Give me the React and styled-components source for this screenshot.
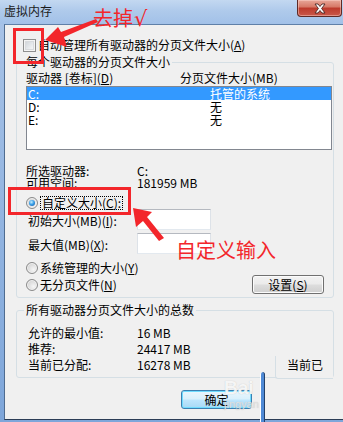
import React from 'react';
import styled, { createGlobalStyle } from 'styled-components';

const Global = createGlobalStyle`
  html, body { margin: 0; padding: 0; }
  body {
    width: 343px; height: 422px; overflow: hidden;
    font-family: "Noto Sans CJK SC", "Noto Sans", sans-serif;
    font-size: 12px; color: #000;
  }
  * { box-sizing: border-box; }
`;

const Window = styled.div`
  position: relative;
  width: 343px;
  height: 422px;
  overflow: hidden;
  background: linear-gradient(180deg, #a9c4e8 0%, #7ea6da 100%);
  display: flex;
  flex-direction: column;
`;

const TitleBar = styled.div`
  height: 24px;
  flex: none;
  display: flex;
  align-items: flex-start;
  background: linear-gradient(180deg, #c3d8f1 0%, #afcaeb 45%, #a2c1e8 100%);
`;

const Title = styled.div`
  padding: 4px 0 0 4px;
  font-size: 12px;
  line-height: 14px;
  color: #1b1b1b;
`;

const CloseButton = styled.div`
  margin-left: auto;
  margin-right: 1px;
  width: 45px;
  height: 17px;
  border: 1px solid #5e2a26;
  border-top: none;
  border-radius: 0 0 4px 4px;
  background: linear-gradient(180deg, #e8a799 0%, #d77a68 42%, #bd3b2c 52%, #c9584a 100%);
  box-shadow: inset 0 0 0 1px rgba(255, 220, 210, 0.45);
  display: flex;
  align-items: center;
  justify-content: center;
`;

const Client = styled.div`
  margin-left: 4px;
  height: 396px;
  flex: none;
  background: #f0f0f0;
  border-left: 1px solid #4f6c90;
  border-top: 1px solid #5f80a8;
  border-bottom: 1px solid #2b3d56;
  display: flex;
  flex-direction: column;
  align-items: flex-start;
`;

const CheckRow = styled.div`
  margin: 13px 0 0 18px;
  display: flex;
  align-items: center;
  gap: 2px;
  line-height: 14px;
  height: 14px;
`;

const CheckBox = styled.span`
  width: 13px;
  height: 13px;
  border: 1px solid #8f8f8f;
  background: linear-gradient(135deg, #c9ced4 0%, #eef0f2 70%, #f8f8f8 100%);
  box-shadow: inset 0 0 0 1px #f4f4f4, inset 0 0 0 2px #d8dadd;
`;

const Group = styled.fieldset`
  margin: ${(p) => p.$top}px 0 0 11px;
  width: 318px;
  min-inline-size: 0;
  border: 1px solid #d5dfe5;
  border-radius: 3px;
  padding: ${(p) => p.$pad};
`;

const Legend = styled.legend`
  padding: 0 2px;
  margin-left: ${(p) => p.$shift}px;
  line-height: 14px;
  font-size: 12px;
`;

const HeaderRow = styled.div`
  display: grid;
  grid-template-columns: 154px 1fr;
  line-height: 14px;
  height: 14px;
`;

const ListBox = styled.div`
  margin-top: 1px;
  width: 306px;
  height: 64px;
  border: 1px solid #828790;
  background: #fff;
`;

const ListRow = styled.div`
  display: grid;
  grid-template-columns: 182px 1fr;
  height: 13px;
  line-height: 13px;
  padding-left: 1px;
  background: ${(p) => (p.$selected ? '#3399ff' : 'transparent')};
  color: ${(p) => (p.$selected ? '#fff' : '#000')};
`;

const InfoGrid = styled.div`
  margin-top: ${(p) => p.$top}px;
  display: grid;
  grid-template-columns: ${(p) => p.$col}px 1fr;
  line-height: ${(p) => p.$lh}px;
`;

const RadioRow = styled.div`
  margin-top: ${(p) => p.$top}px;
  display: flex;
  align-items: center;
  gap: 2px;
  height: 13px;
  line-height: 13px;
`;

const Radio = styled.span`
  position: relative;
  width: 12px;
  height: 12px;
  border-radius: 50%;
  border: 1px solid #8a8a8a;
  background: radial-gradient(circle at 65% 65%, #f6f6f6 0%, #dadada 60%, #c8c8c8 100%);
  box-shadow: inset 0 0 0 1px #f2f2f2;
  flex: none;
  &::after {
    content: '';
    display: ${(p) => (p.$checked ? 'block' : 'none')};
    position: absolute;
    left: 2px;
    top: 2px;
    width: 6px;
    height: 6px;
    border-radius: 50%;
    background: radial-gradient(circle at 40% 35%, #c8efff 0%, #3aa0e8 45%, #0d4f9e 100%);
  }
`;

const FocusLabel = styled.span`
  border: 1px dotted #000;
  padding: 0 1px;
  line-height: 12px;
`;

const InputRow = styled.div`
  margin-top: ${(p) => p.$top}px;
  display: grid;
  grid-template-columns: 111px 74px;
  align-items: center;
  height: 21px;
`;

const FieldLabel = styled.span`
  padding: 2px 0 0 2px;
  line-height: 14px;
`;

const TextBox = styled.span`
  display: block;
  height: 21px;
  background: #fff;
  border: 1px solid;
  border-color: #b5b9c0 #dde2e8 #e3e9ef #dde2e8;
`;

const LastRow = styled.div`
  margin-top: 1px;
  display: flex;
  align-items: center;
  justify-content: space-between;
  height: 19px;
  width: 306px;
`;

const Button = styled.div`
  width: ${(p) => p.$w}px;
  height: 19px;
  margin-left: ${(p) => p.$left || 0}px;
  margin-right: ${(p) => p.$right || 0}px;
  margin-top: ${(p) => p.$top || 0}px;
  border: 1px solid ${(p) => (p.$default ? '#3c7fb1' : '#707070')};
  border-radius: 3px;
  background: ${(p) =>
    p.$default
      ? 'linear-gradient(180deg, #eaf6fd 0%, #d9f0fc 48%, #bee6fd 52%, #a7d9f5 100%)'
      : 'linear-gradient(180deg, #f2f2f2 0%, #ebebeb 48%, #dddddd 52%, #cfcfcf 100%)'};
  box-shadow: ${(p) => (p.$default ? 'inset 0 0 0 1px #6fdcff' : 'inset 0 0 0 1px #fbfbfb')};
  display: flex;
  align-items: center;
  justify-content: center;
  line-height: 14px;
  font-size: 12px;
  flex: none;
`;

const SummaryGrid = styled.div`
  display: grid;
  grid-template-columns: 109px 1fr;
  line-height: 16px;
`;

const Overlay = styled.svg`
  position: absolute;
  left: 0;
  top: 0;
  pointer-events: none;
`;

const Note = styled.span`
  position: absolute;
  left: ${(p) => p.$x}px;
  top: ${(p) => p.$y}px;
  color: #f3262b;
  font-size: 20px;
  line-height: 22px;
  white-space: nowrap;
`;

const Check = styled.span`
  font-family: "DejaVu Sans", sans-serif;
  font-size: 21px;
  margin-left: 1px;
`;

const Ghost = styled.div`
  position: absolute;
  left: 275px;
  top: 356px;
  width: 58px;
  height: 23px;
  border-left: 1px solid #d5dfe5;
  border-bottom: 1px solid #d5dfe5;
  border-radius: 0 0 0 3px;
  padding: 2px 0 0 11px;
  line-height: 14px;
  overflow: hidden;
  white-space: nowrap;
  background: #f0f0f0;
`;

const Watermark = styled.div`
  position: absolute;
  left: 224px;
  top: 378px;
  display: flex;
  flex-direction: column;
  color: rgba(255, 255, 255, 0.85);
  text-shadow: 0 0 1px rgba(160, 160, 160, 0.6);
  pointer-events: none;
`;

const WmBig = styled.span`
  font-family: "Liberation Sans", Arial, sans-serif;
  font-weight: bold;
  font-size: 19px;
  line-height: 20px;
`;

const WmSmall = styled.span`
  font-family: "Liberation Sans", Arial, sans-serif;
  font-size: 11px;
  line-height: 12px;
  color: rgba(230, 230, 230, 0.9);
`;

const Stroke = styled.div`
  position: absolute;
  left: 260px;
  top: 372px;
  width: 5px;
  height: 52px;
  border-radius: 3px 3px 0 0;
  background: #4f8ad6;
  border-left: 1px solid #ffffff;
  border-right: 1px solid #22406a;
`;

export default function App() {
  return (
    <>
      <Global />
      <Window>
        <TitleBar>
          <Title>虚拟内存</Title>
          <CloseButton>
            <svg width="14" height="11" viewBox="0 0 14 11">
              <path
                d="M2 1 H5 L7 3.5 L9 1 H12 L8.6 5.5 L12 10 H9 L7 7.5 L5 10 H2 L5.4 5.5 Z"
                fill="#ffffff"
                stroke="#4a2622"
                strokeWidth="0.9"
              />
            </svg>
          </CloseButton>
        </TitleBar>
        <Client>
          <CheckRow>
            <CheckBox />
            <span>
              自动管理所有驱动器的分页文件大小(<u>A</u>)
            </span>
          </CheckRow>

          <Group $top={3} $pad="2px 0 3px 9px">
            <Legend $shift={-2}>每个驱动器的分页文件大小</Legend>
            <HeaderRow>
              <span>
                驱动器 [卷标](<u>D</u>)
              </span>
              <span>分页文件大小(MB)</span>
            </HeaderRow>
            <ListBox>
              <ListRow $selected>
                <span>C:</span>
                <span>托管的系统</span>
              </ListRow>
              <ListRow>
                <span>D:</span>
                <span>无</span>
              </ListRow>
              <ListRow>
                <span>E:</span>
                <span>无</span>
              </ListRow>
            </ListBox>
            <InfoGrid $top={15} $col={111} $lh={12}>
              <span>所选驱动器:</span>
              <span>C:</span>
              <span>可用空间:</span>
              <span>181959 MB</span>
            </InfoGrid>
            <RadioRow $top={7}>
              <Radio $checked />
              <FocusLabel>
                自定义大小(<u>C</u>):
              </FocusLabel>
            </RadioRow>
            <InputRow $top={0}>
              <FieldLabel>
                初始大小(MB)(<u>I</u>):
              </FieldLabel>
              <TextBox />
            </InputRow>
            <InputRow $top={3}>
              <FieldLabel>
                最大值(MB)(<u>X</u>):
              </FieldLabel>
              <TextBox />
            </InputRow>
            <RadioRow $top={7}>
              <Radio />
              <span>
                系统管理的大小(<u>Y</u>)
              </span>
            </RadioRow>
            <LastRow>
              <RadioRow $top={0}>
                <Radio />
                <span>
                  无分页文件(<u>N</u>)
                </span>
              </RadioRow>
              <Button $w={72} $right={8}>
                设置(<u>S</u>)
              </Button>
            </LastRow>
          </Group>

          <Group $top={5} $pad="8px 0 4px 11px">
            <Legend $shift={-4}>所有驱动器分页文件大小的总数</Legend>
            <SummaryGrid>
              <span>允许的最小值:</span>
              <span>16 MB</span>
              <span>推荐:</span>
              <span>24417 MB</span>
              <span>当前已分配:</span>
              <span>16278 MB</span>
            </SummaryGrid>
          </Group>

          <Button $w={71} $left={176} $top={12} $default>
            确定
          </Button>
        </Client>

        <Ghost>当前已</Ghost>
        <Stroke />
        <Watermark>
          <WmBig>Bai</WmBig>
          <WmSmall>jingyan</WmSmall>
        </Watermark>

        <Overlay width="343" height="422" viewBox="0 0 343 422">
          <rect x="14.5" y="29.5" width="28" height="33" fill="none" stroke="#f3262b" strokeWidth="3" />
          <rect x="9.5" y="188.5" width="120" height="25" fill="none" stroke="#f3262b" strokeWidth="3" />
          <path
            d="M45 40 L58 27 L61 32 L96 19 L98 22 L64 37 L67 47 Z"
            fill="#f3262b"
          />
          <path
            d="M133 208 L152 212 L147 217 L164 238 L159 241 L143 221 L136 227 Z"
            fill="#f3262b"
          />
        </Overlay>
        <Note $x={93} $y={7}>
          去掉<Check>√</Check>
        </Note>
        <Note $x={176} $y={239}>自定义输入</Note>
      </Window>
    </>
  );
}
